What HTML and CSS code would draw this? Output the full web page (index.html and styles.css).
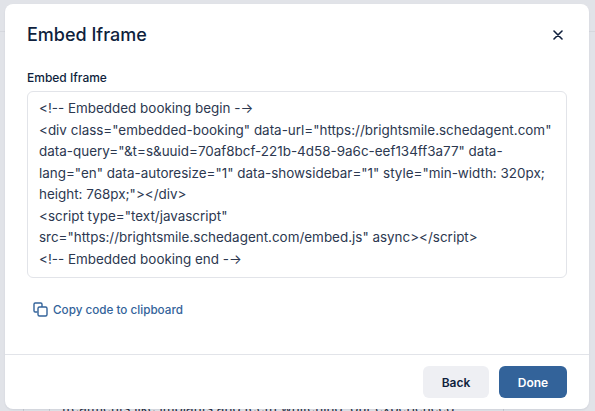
FILE: index.html
```html
<!DOCTYPE html>
<html lang="en">
<head>
  <meta charset="UTF-8">
  <title>Embed Iframe</title>
  <link rel="stylesheet" href="styles.css">
</head>
<body>
  <div class="backdrop">
    <div class="page-header"></div>
    <div class="page-card">
      <div class="page-column"></div>
      <p class="page-text">treatments like implants and teeth whitening, our experienced</p>
    </div>
  </div>
  <div class="modal">
    <div class="modal-header">
      <h2>Embed Iframe</h2>
      <button class="close-button" aria-label="Close">
        <svg width="10" height="10" viewBox="0 0 10 10"><path d="M1 1l8 8M9 1l-8 8" fill="none" stroke="#0f1f3d" stroke-width="1.600" stroke-linecap="round"/></svg>
      </button>
    </div>
    <div class="modal-body">
      <label>Embed Iframe</label>
      <div class="code-box">&lt;!-- Embedded booking begin -&zwnj;-&gt;
&lt;div class="embedded-booking" data-url="https://brightsmile.schedagent.com" data-query="&amp;t=s&amp;uuid=70af8bcf-221b-4d58-9a6c-eef134ff3a77" data-lang="en" data-autoresize="1" data-showsidebar="1" style="min-width: 320px; height: 768px;"&gt;&lt;/div&gt;
&lt;script type="text/javascript" src="https://brightsmile.schedagent.com/embed.js" async&gt;&lt;/script&gt;
&lt;!-- Embedded booking end -&zwnj;-&gt;</div>
      <a class="copy-link" href="#">
        <svg width="15" height="15" viewBox="0 0 15 15" fill="none" stroke="#33639a" stroke-width="1.400"><path d="M4.500 10H2.200A1.200 1.200 0 0 1 1 8.800V2.200A1.200 1.200 0 0 1 2.200 1h5.600A1.200 1.200 0 0 1 9 2.200V5"/><rect x="5" y="5" width="9" height="9" rx="1.500"/></svg>
        Copy code to clipboard
      </a>
    </div>
    <div class="modal-footer">
      <button class="btn btn-back">Back</button>
      <button class="btn btn-done">Done</button>
    </div>
  </div>
</body>
</html>
```

FILE: styles.css
```css
html, body {
  margin: 0;
  padding: 0;
  height: 100%;
  overflow: hidden;
  font-family: "Inter", "Liberation Sans", sans-serif;
}
.backdrop {
  position: absolute;
  inset: 0;
  background: #e1e3e8;
}
.page-header {
  height: 31px;
  border-bottom: 1px solid #d6d8de;
}
.page-card {
  position: absolute;
  left: 23px;
  top: 32px;
  bottom: 0;
  width: 479px;
  border-left: 1px solid #c9ccd3;
  border-right: 1px solid #c9ccd3;
}
.page-column {
  position: absolute;
  left: 25px;
  top: 0;
  bottom: 0;
  border-left: 1px solid #c9ccd3;
}
.page-text {
  position: absolute;
  left: 38px;
  top: 368px;
  margin: 0;
  font-size: 13.500px;
  line-height: 16px;
  color: #1f2a3c;
  white-space: nowrap;
}
.modal {
  position: absolute;
  left: 5px;
  top: 4px;
  width: 584px;
  height: 405px;
  display: flex;
  flex-direction: column;
  background: #fff;
  border-radius: 8px;
  box-shadow: 0 1px 2px rgba(15, 31, 61, 0.08);
}
.modal-header {
  display: flex;
  justify-content: space-between;
  align-items: center;
  padding: 19px 26px 0 22px;
  height: 23px;
}
h2 {
  margin: 0;
  font-size: 18px;
  font-weight: 500;
  color: #0f1f3d;
}
.close-button {
  border: none;
  background: none;
  padding: 0;
  display: flex;
}
.modal-body {
  flex: 1;
  padding: 24px 22px 0;
}
label {
  display: block;
  font-size: 12px;
  font-weight: 500;
  line-height: 16px;
  color: #0f1f3d;
  margin-bottom: 5px;
}
.code-box {
  box-sizing: border-box;
  height: 187px;
  padding: 6px 11px;
  border: 1px solid #e2e4e9;
  border-radius: 6px;
  font-size: 13.450px;
  line-height: 21.500px;
  color: #2c3850;
  white-space: pre-wrap;
}
.copy-link {
  display: inline-flex;
  align-items: center;
  gap: 5px;
  margin: 24px 0 0 6px;
  font-size: 11.700px;
  font-weight: 500;
  color: #33639a;
  text-decoration: none;
}
.modal-footer {
  display: flex;
  justify-content: flex-end;
  gap: 10px;
  padding: 11px 22px 11px;
  border-top: 1px solid #e2e4e9;
}
.btn {
  height: 32px;
  border: none;
  border-radius: 6px;
  font-family: inherit;
  font-size: 12px;
  font-weight: 600;
}
.btn-back {
  width: 66px;
  background: #eeeff3;
  color: #0f1f3d;
}
.btn-done {
  width: 68px;
  background: #33639a;
  color: #fff;
}
```
